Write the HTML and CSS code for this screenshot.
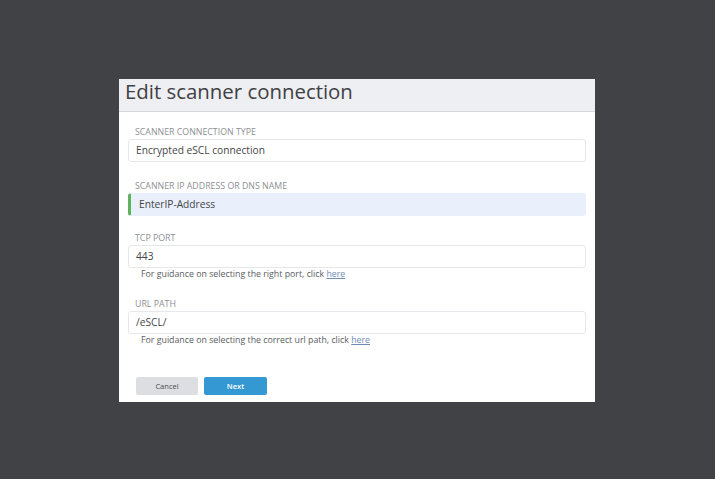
FILE: index.html
```html
<!DOCTYPE html>
<html>
<head>
<meta charset="utf-8">
<link rel="stylesheet" href="styles.css">
</head>
<body>
<div class="dialog">
  <div class="dialog-header"><h1 class="title">Edit scanner connection</h1></div>
  <div class="dialog-body">
    <div class="field f1">
      <div class="label">Scanner connection type</div>
      <div class="input">Encrypted eSCL connection</div>
    </div>
    <div class="field f2">
      <div class="label">Scanner IP address or DNS name</div>
      <div class="input active">EnterIP-Address</div>
    </div>
    <div class="field f3">
      <div class="label">TCP port</div>
      <div class="input">443</div>
      <div class="help">For guidance on selecting the right port, click <a class="link">here</a></div>
    </div>
    <div class="field f4">
      <div class="label">URL path</div>
      <div class="input">/eSCL/</div>
      <div class="help">For guidance on selecting the correct url path, click <a class="link">here</a></div>
    </div>
    <div class="actions">
      <button class="btn btn-cancel">Cancel</button>
      <button class="btn btn-next">Next</button>
    </div>
  </div>
</div>
</body>
</html>
```

FILE: styles.css
```css
html, body {
  margin: 0;
  padding: 0;
  background: #414246;
  font-family: "Open Sans", "Liberation Sans", sans-serif;
}
body {
  padding: 79px 0 0 119px;
  height: 479px;
  box-sizing: border-box;
}
.dialog {
  width: 476px;
  height: 323px;
  background: #ffffff;
  box-sizing: border-box;
}
.dialog-header {
  height: 32px;
  background: #eeeff2;
  border-bottom: 1px solid #d6d7da;
  padding: 2px 0 0 6px;
  box-sizing: content-box;
  height: 30px;
}
.title {
  margin: 0;
  font-weight: 400;
  font-size: 20.4px;
  color: #3f4042;
  line-height: 20px;
}
.dialog-body {
  padding: 14px 9px 0 9px;
}
.f2 { margin-top: 18px; }
.f3 { margin-top: 16px; }
.f4 { margin-top: 17px; }
.label {
  font-size: 8.8px;
  line-height: 12px;
  margin-bottom: 1px;
  padding-left: 7px;
  text-transform: uppercase;
  color: #8d8f93;
}
.input {
  height: 23px;
  box-sizing: border-box;
  border: 1px solid #e6e7ea;
  border-radius: 3px;
  padding-left: 7px;
  font-size: 10.2px;
  line-height: 21px;
  color: #444548;
}
.input.active {
  background: #e9f0fb;
  border-color: #e9f0fb;
  border-left: 3px solid #5cb45c;
  padding-left: 8px;
}
.help {
  padding-left: 13px;
  font-size: 8.8px;
  line-height: 13px;
  color: #5a5c5f;
}
.link {
  color: #6f8db5;
  text-decoration: underline;
}
.actions {
  display: flex;
  gap: 6px;
  margin-top: 30px;
  padding-left: 8px;
}
.btn {
  height: 18px;
  width: 62px;
  border: none;
  border-radius: 2px;
  font-family: "Open Sans", "Liberation Sans", sans-serif;
  font-size: 7.5px;
  padding: 0;
}
.btn-cancel {
  background: #dcdee2;
  color: #4a4b4e;
}
.btn-next {
  width: 63px;
  background: #3499d3;
  color: #ffffff;
  font-weight: 600;
}
```
